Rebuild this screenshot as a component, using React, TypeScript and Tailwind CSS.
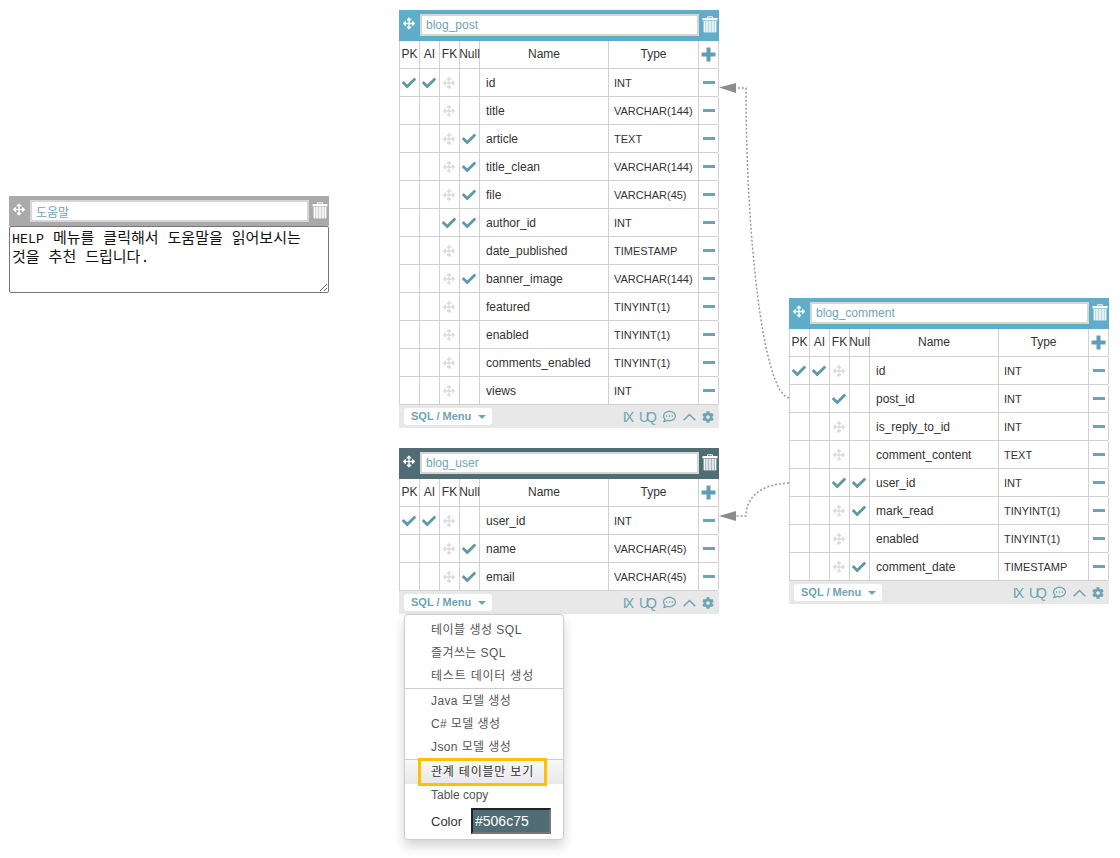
import { FaArrowsAlt, FaCheck, FaCog, FaRegCommentDots } from "react-icons/fa";

type Mark = "check" | "move" | "";
type Row = { pk?: Mark; ai?: Mark; fk?: Mark; nul?: Mark; name: string; type: string };

const move: Mark = "move";
const check: Mark = "check";

const postRows: Row[] = [
  { pk: check, ai: check, fk: move, name: "id", type: "INT" },
  { fk: move, name: "title", type: "VARCHAR(144)" },
  { fk: move, nul: check, name: "article", type: "TEXT" },
  { fk: move, nul: check, name: "title_clean", type: "VARCHAR(144)" },
  { fk: move, nul: check, name: "file", type: "VARCHAR(45)" },
  { fk: check, nul: check, name: "author_id", type: "INT" },
  { fk: move, name: "date_published", type: "TIMESTAMP" },
  { fk: move, nul: check, name: "banner_image", type: "VARCHAR(144)" },
  { fk: move, name: "featured", type: "TINYINT(1)" },
  { fk: move, name: "enabled", type: "TINYINT(1)" },
  { fk: move, name: "comments_enabled", type: "TINYINT(1)" },
  { fk: move, name: "views", type: "INT" },
];

const userRows: Row[] = [
  { pk: check, ai: check, fk: move, name: "user_id", type: "INT" },
  { fk: move, nul: check, name: "name", type: "VARCHAR(45)" },
  { fk: move, nul: check, name: "email", type: "VARCHAR(45)" },
];

const commentRows: Row[] = [
  { pk: check, ai: check, fk: move, name: "id", type: "INT" },
  { fk: check, name: "post_id", type: "INT" },
  { fk: move, name: "is_reply_to_id", type: "INT" },
  { fk: move, name: "comment_content", type: "TEXT" },
  { fk: check, nul: check, name: "user_id", type: "INT" },
  { fk: move, nul: check, name: "mark_read", type: "TINYINT(1)" },
  { fk: move, name: "enabled", type: "TINYINT(1)" },
  { fk: move, nul: check, name: "comment_date", type: "TIMESTAMP" },
];

const Trash = () => (
  <svg width="16" height="17" viewBox="0 0 16 17" fill="none" className="shrink-0">
    <path d="M5.5 2V.8h5V2" stroke="#fff" strokeWidth="1" />
    <rect x="0.5" y="2" width="15" height="2.4" fill="#fff" />
    <path d="M1.8 5h12.4v10.6a1 1 0 0 1-1 1H2.8a1 1 0 0 1-1-1z" fill="#fff" opacity="0.55" />
    <path d="M2.3 5v11.2M5 5v11.2M8 5v11.2M11 5v11.2M13.7 5v11.2" stroke="#fff" strokeWidth="1.2" />
  </svg>
);

const Plus = () => (
  <svg width="15" height="15" viewBox="0 0 15 15" fill="#5f9fb5">
    <rect x="5.5" y="0.5" width="4" height="14" />
    <rect x="0.5" y="5.5" width="14" height="4" />
  </svg>
);

const Minus = () => <span className="block h-[3px] w-[12px] bg-[#6ea4b2]" />;

const Cell = ({ mark }: { mark?: Mark }) => (
  <div className="flex items-center justify-center border-r border-[#d0d0d0] pr-[1px]">
    {mark === "check" && <FaCheck className="text-[14px] text-[#5f98a8]" />}
    {mark === "move" && <FaArrowsAlt className="text-[12px] text-[#dddddd]" />}
  </div>
);

const Header = ({ name, color, tall }: { name: string; color: string; tall?: boolean }) => (
  <div className={`flex items-start gap-[5px] pl-[4px] pr-[1px] pt-[4px] ${tall ? "h-[31px]" : "h-[30px]"} ${color}`}>
    <FaArrowsAlt className="mt-[3px] w-[12px] shrink-0 text-[13px] text-white" />
    <input
      readOnly
      value={name}
      className="h-[22px] w-[279px] shrink-0 border-2 border-[#d6d6d6] bg-white px-[4px] text-[12px] text-[#6da5b5] outline-none"
    />
    <div className="ml-[-2px] mt-[2px] shrink-0">
      <Trash />
    </div>
  </div>
);

const Footer = () => (
  <div className="flex h-[23px] items-start justify-between bg-[#e8e8e8] pl-[5px] pr-[5px] pt-[3px]">
    <div className="flex h-[17px] w-[88px] items-center gap-[7px] rounded-[3px] bg-white pl-[7px] text-[11px] font-bold text-[#6ea4b2]">
      SQL / Menu
      <span className="mt-[1px] h-0 w-0 border-x-[4px] border-t-[4px] border-x-transparent border-t-[#6ea4b2]" />
    </div>
    <div className="flex h-[17px] items-center text-[#6ea4b2]">
      <span className="mr-[7px] text-[14px] leading-none tracking-[-2px]">IX</span>
      <span className="mr-[9px] text-[14px] leading-none tracking-[-3px]">UQ</span>
      <FaRegCommentDots className="mr-[7px] text-[13px]" />
      <svg width="13" height="8" viewBox="0 0 13 8" fill="none" className="mr-[6px]">
        <path d="M.7 7.3 6.5 1.5l5.8 5.8" stroke="currentColor" strokeWidth="1.5" />
      </svg>
      <FaCog className="text-[12px]" />
    </div>
  </div>
);

const DbTable = ({ name, color, rows, className }: { name: string; color: string; rows: Row[]; className: string }) => (
  <div className={`absolute w-[320px] ${className}`}>
    <Header name={name} color={color} tall />
    <div className="border-l border-r border-[#d0d0d0] border-r-transparent">
      <div className="grid h-[28px] grid-cols-[20px_20px_20px_20px_129px_90px_20px] border-b border-[#d0d0d0] text-[12px] text-[#333333]">
        <div className="flex items-center justify-center border-r border-[#d0d0d0] pb-[2px]">PK</div>
        <div className="flex items-center justify-center border-r border-[#d0d0d0] pb-[2px]">AI</div>
        <div className="flex items-center justify-center border-r border-[#d0d0d0] pb-[2px]">FK</div>
        <div className="flex items-center justify-center whitespace-nowrap border-r border-[#d0d0d0] pb-[2px]">Null</div>
        <div className="flex items-center justify-center border-r border-[#d0d0d0] pb-[2px]">Name</div>
        <div className="flex items-center justify-center border-r border-[#d0d0d0] pb-[2px]">Type</div>
        <div className="flex items-center justify-center border-r border-[#d0d0d0]">
          <Plus />
        </div>
      </div>
      {rows.map((row) => (
        <div
          key={row.name}
          className="grid h-[28px] grid-cols-[20px_20px_20px_20px_129px_90px_20px] border-b border-[#d0d0d0] text-[#333333]"
        >
          <Cell mark={row.pk} />
          <Cell mark={row.ai} />
          <Cell mark={row.fk} />
          <Cell mark={row.nul} />
          <div className="flex items-center border-r border-[#d0d0d0] pl-[6px] text-[12px]">{row.name}</div>
          <div className="flex items-center border-r border-[#d0d0d0] pl-[5px] pt-[2px] text-[11px]">{row.type}</div>
          <div className="flex items-center justify-center border-r border-[#d0d0d0] pb-[1px]">
            <Minus />
          </div>
        </div>
      ))}
    </div>
    <Footer />
  </div>
);

const MenuItem = ({ children, className }: { children: string; className: string }) => (
  <div className={`flex items-center pl-[26px] text-[12px] text-[#555555] ${className}`}>{children}</div>
);

const Menu = () => (
  <div className="absolute left-[404px] top-[614px] w-[160px] rounded-[4px] border border-[#cccccc] bg-white pt-[3px] shadow-[0_6px_12px_rgba(0,0,0,0.175)]">
    <MenuItem className="h-[23px] tracking-[0.5px]">테이블 생성 SQL</MenuItem>
    <MenuItem className="h-[23px] tracking-[0.4px]">즐겨쓰는 SQL</MenuItem>
    <MenuItem className="h-[23px] tracking-[0.8px]">테스트 데이터 생성</MenuItem>
    <div className="mt-[1px] border-t border-[#cccccc]" />
    <MenuItem className="h-[23px] tracking-[0.4px]">Java 모델 생성</MenuItem>
    <MenuItem className="h-[23px] tracking-[0.4px]">C# 모델 생성</MenuItem>
    <MenuItem className="h-[23px] tracking-[0.4px]">Json 모델 생성</MenuItem>
    <div className="relative mt-[1px] h-[25px] border-t border-[#cccccc] bg-gradient-to-b from-[#f8f8f8] to-[#e8e8e8]">
      <div className="flex h-full items-center pl-[26px] text-[12px] tracking-[0.8px] text-[#333333]">관계 테이블만 보기</div>
      <div className="absolute left-[13px] top-[-2px] h-[28px] w-[129px] border-[3px] border-[#ffc000]" />
    </div>
    <MenuItem className="h-[22px]">Table copy</MenuItem>
    <div className="flex items-center pb-[5px] pl-[26px] pt-[2px]">
      <span className="w-[40px] pt-[2px] text-[13px] text-[#333333]">Color</span>
      <input
        readOnly
        value="#506c75"
        className="h-[26px] w-[80px] border-2 border-b-[#767676] border-l-[#222222] border-r-[#767676] border-t-[#222222] bg-[#506c75] pl-[2px] text-[14px] text-white outline-none"
      />
    </div>
  </div>
);

const Connectors = () => (
  <svg width="1120" height="858" className="pointer-events-none absolute left-0 top-0">
    <path d="M789 398C762 392 746 230 746 88H736" fill="none" stroke="#999999" strokeWidth="1.5" strokeDasharray="2 2" />
    <path d="M789 483C760 484 746 498 746 516H736" fill="none" stroke="#999999" strokeWidth="1.5" strokeDasharray="2 2" />
    <path d="M719 87.5 736 83V93z" fill="#8c8c8c" />
    <path d="M719 516 736 511V521z" fill="#8c8c8c" />
  </svg>
);

export default function App() {
  return (
    <div className="relative h-[858px] w-[1120px] overflow-hidden bg-white font-['Liberation_Sans','Noto_Sans_CJK_KR',sans-serif]">
      <div className="absolute left-[9px] top-[196px] w-[320px]">
        <Header name="도움말" color="bg-[#aaaaaa]" />
        <div className="h-[67px] w-full resize overflow-auto whitespace-pre rounded-[2px] border border-[#767676] px-[2px] pt-[3px] font-['Liberation_Mono','Noto_Sans_CJK_KR',monospace] text-[15px] leading-[19px] text-[#111111]">
          <div>
            <span className="text-[13.3px]">HELP</span> 메뉴를 클릭해서 도움말을 읽어보시는
          </div>
          <div>것을 추천 드립니다.</div>
        </div>
      </div>

      <DbTable name="blog_post" color="bg-[#5fadc8]" rows={postRows} className="left-[399px] top-[10px]" />
      <DbTable name="blog_user" color="bg-[#506c75]" rows={userRows} className="left-[399px] top-[448px]" />
      <DbTable name="blog_comment" color="bg-[#5fadc8]" rows={commentRows} className="left-[789px] top-[298px]" />

      <Connectors />
      <Menu />
    </div>
  );
}
